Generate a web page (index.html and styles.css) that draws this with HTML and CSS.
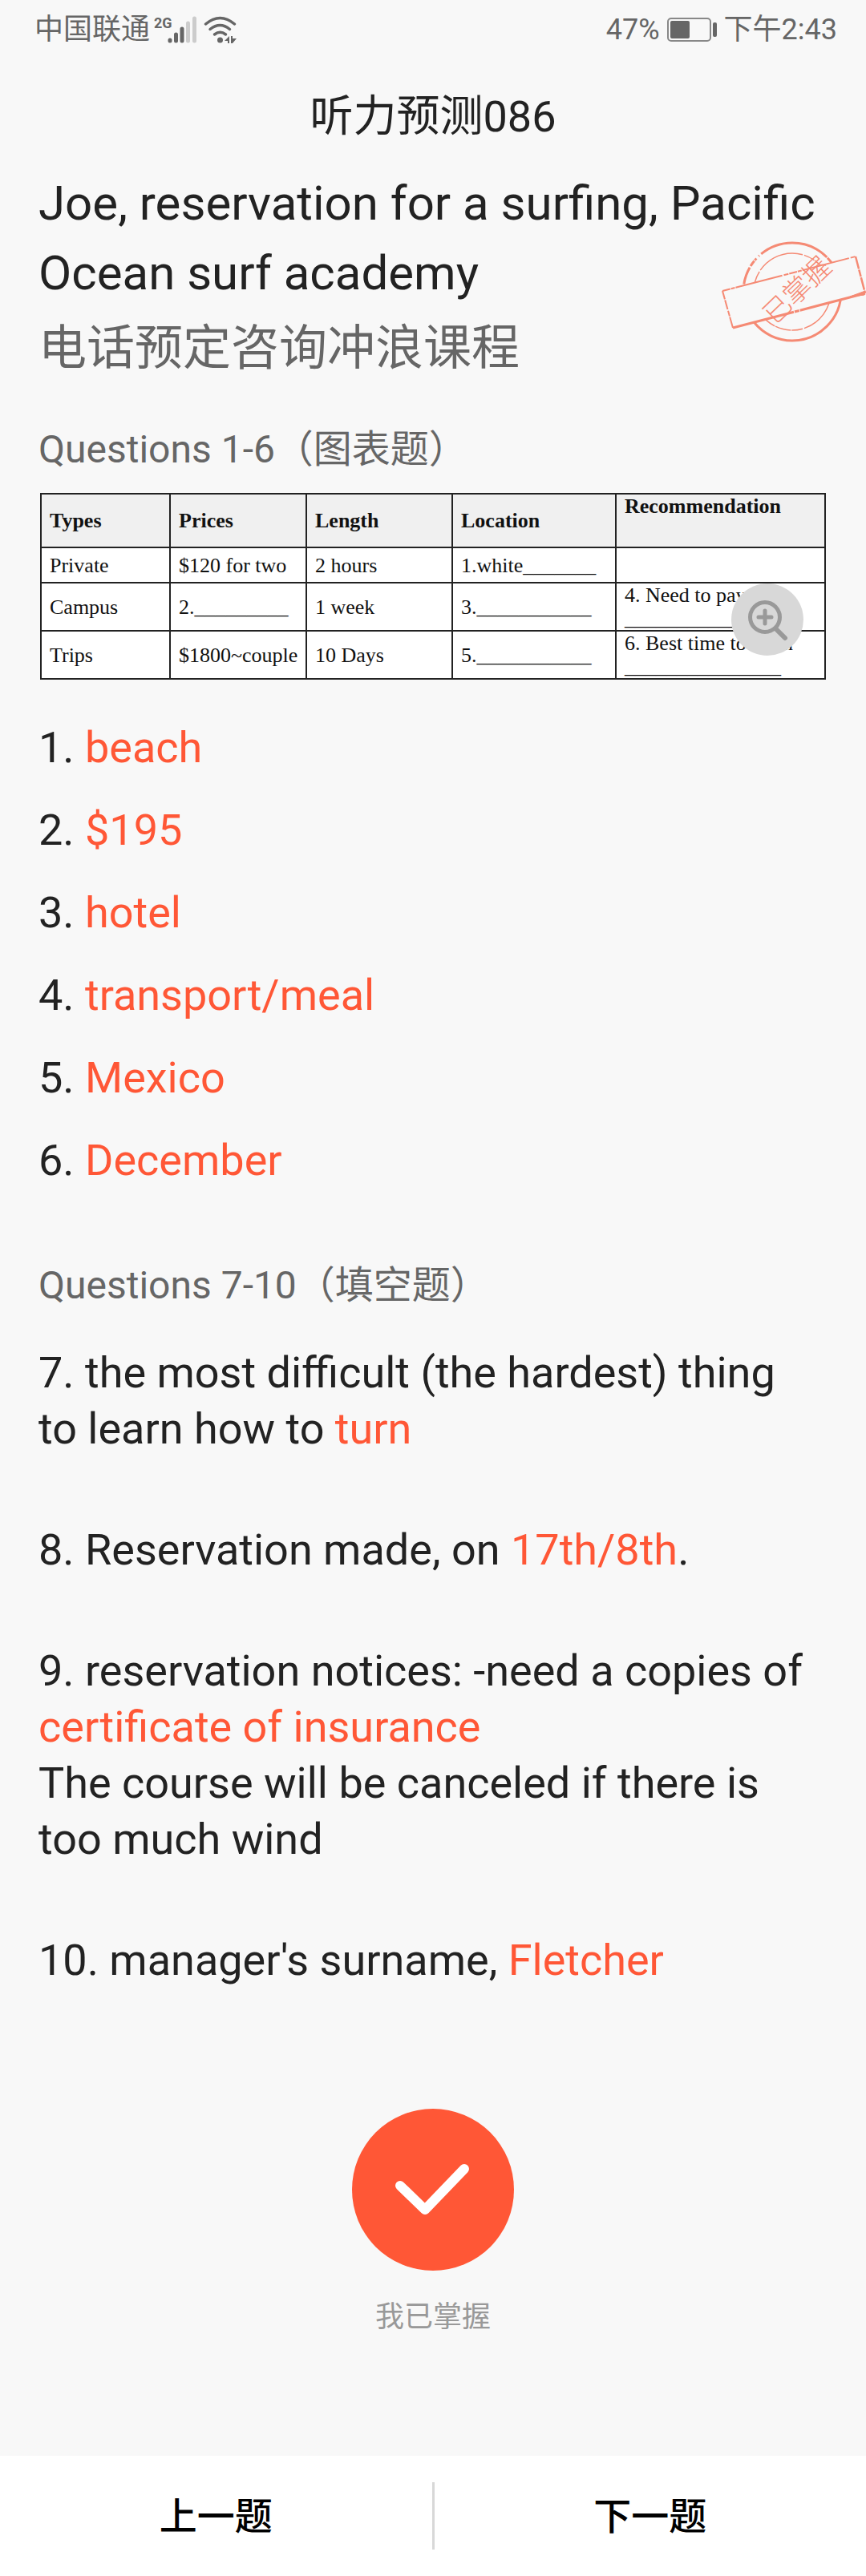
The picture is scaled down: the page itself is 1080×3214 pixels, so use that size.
FILE: index.html
```html
<!DOCTYPE html>
<html lang="zh-CN">
<head>
  <meta charset="UTF-8">
  <meta name="viewport" content="width=device-width, initial-scale=1.0">
  <title>听力预测086</title>
  <link rel="stylesheet" href="styles.css">
</head>
<body>
  <div class="status-bar">
    <div class="status-left">
      <span>中国联通</span>
      <svg class="signal" width="54" height="36" viewBox="0 0 54 36" aria-hidden="true">
        <text x="0" y="16">2G</text>
        <g stroke="#666" stroke-width="5" stroke-linecap="round">
          <path d="M20 31v1M27.500 24v8M35 17v15"/>
          <path d="M42.500 10v22M50.500 4v28" stroke="#ccc"/>
        </g>
      </svg>
      <svg class="wifi" width="42" height="36" viewBox="0 0 42 36" aria-hidden="true">
        <g fill="none" stroke="#666" stroke-width="3.500" stroke-linecap="round">
          <path d="M2.500 11Q20.500-4 38.500 11"/>
          <path d="M8 17.500Q20.500 7.500 32.500 17.500"/>
          <path d="M13.500 24Q20.500 18.500 27.500 24"/>
        </g>
        <circle cx="20.500" cy="31" r="3.500" fill="#666"/>
        <path d="M32 26v9h-2v-3h-4zM34 26h2v3h5l-5 6h-2z" fill="#666"/>
      </svg>
    </div>
    <div class="status-right">
      <span>47%</span>
      <svg width="62" height="32" viewBox="0 0 62 32" aria-hidden="true">
        <rect x="1" y="2" width="53" height="28" rx="4" fill="none" stroke="#888" stroke-width="2"/>
        <rect x="4" y="5" width="24" height="22" rx="2" fill="#666"/>
        <rect x="57" y="7" width="5" height="18" rx="2" fill="#666"/>
      </svg>
      <span>下午2:43</span>
    </div>
  </div>

  <header class="page-title">听力预测086</header>

  <main class="content">
    <h1>Joe, reservation for a surfing, Pacific Ocean surf academy</h1>
    <p class="subtitle">电话预定咨询冲浪课程</p>

    <h2>Questions 1-6（图表题）</h2>
    <div class="table-box">
      <table>
        <colgroup>
          <col class="col-types">
          <col class="col-prices">
          <col class="col-length">
          <col class="col-location">
          <col>
        </colgroup>
        <thead>
          <tr><th>Types</th><th>Prices</th><th>Length</th><th>Location</th><th class="top">Recommendation</th></tr>
        </thead>
        <tbody>
          <tr class="short"><td>Private</td><td>$120 for two</td><td>2 hours</td><td>1.white_______</td><td></td></tr>
          <tr><td>Campus</td><td>2._________</td><td>1 week</td><td>3.___________</td><td>4. Need to pay for<br>_______________</td></tr>
          <tr><td>Trips</td><td>$1800~couple</td><td>10 Days</td><td>5.___________</td><td>6. Best time to learn<br>_______________</td></tr>
        </tbody>
      </table>
      <button class="zoom" type="button" aria-label="放大">
        <svg width="90" height="90" viewBox="0 0 90 90" fill="none" stroke="#999" stroke-linecap="round" aria-hidden="true">
          <circle cx="42" cy="42" r="18.500" stroke-width="5"/>
          <path d="M34 42h16M42 34v16" stroke-width="5"/>
          <path d="M56 57L67 68" stroke-width="6"/>
        </svg>
      </button>
    </div>

    <div class="answers">
      <p>1. <em>beach</em></p>
      <p>2. <em>$195</em></p>
      <p>3. <em>hotel</em></p>
      <p>4. <em>transport/meal</em></p>
      <p>5. <em>Mexico</em></p>
      <p>6. <em>December</em></p>
    </div>

    <h2>Questions 7-10（填空题）</h2>
    <div class="blanks">
      <p>7. the most difficult (the hardest) thing to learn how to <em>turn</em></p>
      <p>8. Reservation made, on <em>17th/8th</em>.</p>
      <p>9. reservation notices: -need a copies of <em>certificate of insurance</em><br>The course will be canceled if there is too much wind</p>
      <p>10. manager's surname, <em>Fletcher</em></p>
    </div>

    <!-- 印章 -->
    <svg class="stamp" width="200" height="160" viewBox="0 0 200 160" role="img" aria-label="已掌握">
      <g fill="none" stroke="#f58a74">
        <circle cx="108" cy="84" r="61" stroke-width="3" stroke-dasharray="150 2 9 1 30 3 4 2 22 2 8 1 3 4 1 3 90 1"/>
        <circle cx="108" cy="84" r="48" stroke-width="1.500" stroke-dasharray="60 2 14 1 20 1 26 3 8 2 40 2"/>
        <path d="M21 83L187 40L199 86L34 129Z" fill="#f8f8f8" stroke="none"/>
        <path d="M21 83L187 40" stroke-width="2" stroke-dasharray="10 1 5 1 60 2 6 1"/>
        <path d="M187 40L199 86" stroke-width="2.500" stroke-dasharray="16 1 9 1"/>
        <path d="M199 86L34 129" stroke-width="3" stroke-dasharray="84 1 6 1 90 1"/>
        <path d="M199 83L180 90L198 88Z" fill="#f58a74"/>
        <path d="M34 129L21 83" stroke-width="2" stroke-dasharray="14 1 7 2 12 1"/>
      </g>
      <text x="114" y="94" transform="rotate(-44 114 82)">已掌握</text>
    </svg>
  </main>

  <div class="done">
    <button type="button" id="done-btn" aria-labelledby="done-label">
      <svg width="202" height="202" viewBox="0 0 202 202" aria-hidden="true">
        <path d="M60 96L91 126L140 75" fill="none" stroke="#fff" stroke-width="12" stroke-linecap="round" stroke-linejoin="round"/>
      </svg>
    </button>
    <span id="done-label">我已掌握</span>
  </div>

  <nav class="bottom-nav">
    <button type="button">上一题</button>
    <button type="button">下一题</button>
  </nav>
</body>
</html>
```
FILE: styles.css
```css
/* Reset */
* {
  box-sizing: border-box;
  margin: 0;
  padding: 0;
}

body {
  display: flex;
  flex-direction: column;
  min-height: 100vh;
  position: relative;
  font-family: Roboto, "Noto Sans CJK SC", sans-serif;
  background: #f8f8f8;
  color: #222;
}

button {
  border: none;
  background: none;
  font-family: inherit;
  cursor: pointer;
}

em {
  font-style: normal;
  color: #ff5736;
}

/* Status bar */
.status-bar {
  display: flex;
  justify-content: space-between;
  padding: 0 36px 0 43px;
  height: 74px;
  font-size: 36px;
  line-height: 74px;
  color: #666;
}
.status-left,
.status-right {
  display: flex;
  align-items: center;
}
.status-right {
  gap: 9px;
}
.signal {
  margin-left: 5px;
}
.signal text {
  font-size: 18px;
  font-weight: 700;
  fill: #666;
}
.wifi {
  margin-left: 8px;
}

.page-title {
  padding-top: 32px;
  font-size: 54px;
  line-height: 80px;
  text-align: center;
}

/* Content */
.content {
  padding: 24px 48px 0;
}

h1 {
  font-size: 60px;
  font-weight: 400;
  line-height: 87px;
}

.subtitle {
  margin-top: 6px;
  font-size: 60px;
  line-height: 90px;
  color: #666;
}

h2 {
  margin-top: 46px;
  font-size: 48px;
  font-weight: 400;
  line-height: 70px;
  color: #666;
}

/* Table */
.table-box {
  position: relative;
  margin: 19px 2px 0;
}

table {
  width: 100%;
  table-layout: fixed;
  border-collapse: collapse;
  background: #fff;
  color: #111;
  font-family: "Liberation Serif", serif;
  font-size: 26px;
  line-height: 29px;
}
th,
td {
  height: 60px;
  padding: 0 0 0 10px;
  border: 2px solid #222;
  text-align: left;
  white-space: nowrap;
}
th {
  height: 67px;
  background: #f0f0f0;
}
th.top {
  vertical-align: top;
}
.short td {
  height: 44px;
}
.col-types {
  width: 161px;
}
.col-prices {
  width: 170px;
}
.col-length {
  width: 182px;
}
.col-location {
  width: 204px;
}

.zoom {
  position: absolute;
  right: 28px;
  bottom: 30px;
  width: 90px;
  height: 90px;
  border-radius: 50%;
  background: #d8d8d8;
}

/* Answers */
.answers {
  display: flex;
  flex-direction: column;
  gap: 40px;
  margin-top: 53px;
  font-size: 54px;
  line-height: 63px;
}
.answers + h2 {
  margin-top: 90px;
}

.blanks {
  display: flex;
  flex-direction: column;
  gap: 81px;
  margin-top: 39px;
  padding-right: 16px;
  font-size: 54px;
  line-height: 70px;
}

.stamp {
  position: absolute;
  top: 280px;
  right: 0;
}
.stamp text {
  font-size: 34px;
  font-weight: 300;
  text-anchor: middle;
  fill: #f58a74;
}

/* Mastered button */
.done {
  display: flex;
  flex-direction: column;
  align-items: center;
  gap: 32px;
  margin-top: 150px;
  padding-bottom: 130px;
  font-size: 36px;
  line-height: 52px;
  color: #999;
}
.done button {
  width: 202px;
  height: 202px;
  border-radius: 50%;
  background: #ff5736;
}

/* Bottom navigation */
.bottom-nav {
  display: flex;
  align-items: center;
  height: 150px;
  margin-top: auto;
  background: #fff;
}
.bottom-nav button {
  flex: 1;
  height: 84px;
  padding-top: 2px;
  font-size: 47px;
  font-weight: 500;
  line-height: 70px;
  color: #000;
}
.bottom-nav button + button {
  border-left: 3px solid #d8d8d8;
}
```
